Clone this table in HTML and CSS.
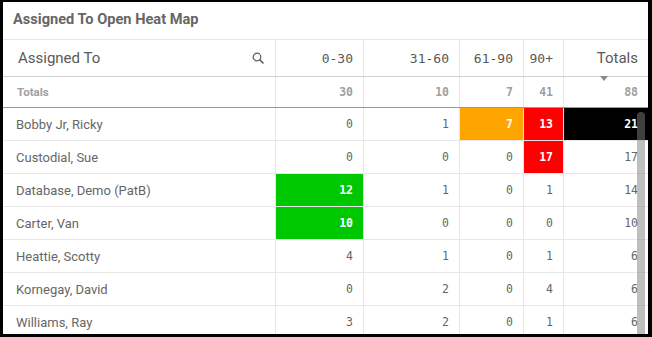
FILE: index.html
```html
<!DOCTYPE html>
<html>
<head>
<meta charset="utf-8">
<link rel="stylesheet" href="styles.css">
</head>
<body>
<div class="panel">
  <div class="title">Assigned To Open Heat Map</div>
  <div class="table">
    <div class="row head">
      <div class="cell dim">
        <span>Assigned To</span>
        <svg class="search" width="12" height="12" viewBox="0 0 12 12"><circle cx="5" cy="5" r="3.8" fill="none" stroke="#595959" stroke-width="1.2"/><line x1="7.8" y1="7.8" x2="11" y2="11" stroke="#595959" stroke-width="1.6" stroke-linecap="round"/></svg>
      </div>
      <div class="cell num">0-30</div>
      <div class="cell num">31-60</div>
      <div class="cell num">61-90</div>
      <div class="cell num">90+</div>
      <div class="cell num sorted">Totals<span class="sort"></span></div>
    </div>
    <div class="row totals">
      <div class="cell dim">Totals</div>
      <div class="cell num">30</div>
      <div class="cell num">10</div>
      <div class="cell num">7</div>
      <div class="cell num">41</div>
      <div class="cell num">88</div>
    </div>
    <div class="row">
      <div class="cell dim">Bobby Jr, Ricky</div>
      <div class="cell num">0</div>
      <div class="cell num">1</div>
      <div class="cell num orange">7</div>
      <div class="cell num red">13</div>
      <div class="cell num black">21</div>
    </div>
    <div class="row">
      <div class="cell dim">Custodial, Sue</div>
      <div class="cell num">0</div>
      <div class="cell num">0</div>
      <div class="cell num">0</div>
      <div class="cell num red">17</div>
      <div class="cell num">17</div>
    </div>
    <div class="row">
      <div class="cell dim">Database, Demo (PatB)</div>
      <div class="cell num green">12</div>
      <div class="cell num">1</div>
      <div class="cell num">0</div>
      <div class="cell num">1</div>
      <div class="cell num">14</div>
    </div>
    <div class="row">
      <div class="cell dim">Carter, Van</div>
      <div class="cell num green">10</div>
      <div class="cell num">0</div>
      <div class="cell num">0</div>
      <div class="cell num">0</div>
      <div class="cell num">10</div>
    </div>
    <div class="row">
      <div class="cell dim">Heattie, Scotty</div>
      <div class="cell num">4</div>
      <div class="cell num">1</div>
      <div class="cell num">0</div>
      <div class="cell num">1</div>
      <div class="cell num">6</div>
    </div>
    <div class="row">
      <div class="cell dim">Kornegay, David</div>
      <div class="cell num">0</div>
      <div class="cell num">2</div>
      <div class="cell num">0</div>
      <div class="cell num">4</div>
      <div class="cell num">6</div>
    </div>
    <div class="row">
      <div class="cell dim">Williams, Ray</div>
      <div class="cell num">3</div>
      <div class="cell num">2</div>
      <div class="cell num">0</div>
      <div class="cell num">1</div>
      <div class="cell num">6</div>
    </div>
  </div>
  <div class="scrollbar"></div>
</div>
</body>
</html>
```

FILE: styles.css
```css
html, body {
  margin: 0;
  padding: 0;
  background: #000;
  width: 652px;
  height: 337px;
  overflow: hidden;
}
body {
  padding: 2px 4px 3px 3px;
  box-sizing: border-box;
}
.panel {
  position: relative;
  background: #fff;
  width: 645px;
  height: 332px;
  overflow: hidden;
  font-family: Roboto, "Open Sans", sans-serif;
  color: #666;
}
.title {
  height: 38px;
  box-sizing: border-box;
  border-bottom: 1px solid #e6e6e6;
  padding: 8px 0 0 10px;
  font-size: 14.6px;
  font-weight: 700;
  color: #666;
}
.row {
  display: grid;
  grid-template-columns: 273px 88px 96px 64px 40px 84px;
  height: 33px;
  box-sizing: border-box;
  border-bottom: 1px solid #e8e8e8;
}
.row.head {
  height: 37px;
  border-bottom-color: #cfcfcf;
}
.row.totals {
  height: 31px;
  border-bottom-color: #9a9a9a;
}
.cell {
  box-sizing: border-box;
  border-right: 1px solid #e6e6e6;
  display: flex;
  align-items: center;
  font-size: 13px;
  color: #666;
}
.cell:last-child {
  border-right: none;
}
.dim {
  padding-left: 13px;
}
.num {
  justify-content: flex-end;
  padding-right: 10px;
  font-family: "DejaVu Sans Mono", "Liberation Mono", monospace;
  font-size: 11.5px;
  color: #666;
}
.head .dim {
  padding-left: 15px;
  padding-right: 11px;
  justify-content: space-between;
  font-size: 15px;
  color: #595959;
}
.head .num {
  font-size: 13px;
  color: #595959;
}
.head .sorted {
  position: relative;
  font-family: Roboto, "Open Sans", sans-serif;
  font-size: 15px;
}
.sort {
  position: absolute;
  left: 36px;
  bottom: -5px;
  width: 0;
  height: 0;
  border-left: 4px solid transparent;
  border-right: 4px solid transparent;
  border-top: 5px solid #8a8a8a;
}
.totals .cell {
  font-weight: 700;
  color: #a0a0a0;
}
.totals .dim {
  font-size: 11.5px;
  padding-left: 14px;
}
.totals .num {
  font-size: 11.5px;
}
.orange, .red, .black, .green {
  color: #fff;
  font-weight: 700;
}
.orange { background: #ffa500; }
.red { background: #ff0000; }
.black { background: #000; }
.green { background: #00c800; }
.scrollbar {
  position: absolute;
  left: 634px;
  top: 110px;
  bottom: 0;
  width: 8px;
  border-radius: 4px 4px 0 0;
  background: rgba(128, 128, 128, 0.5);
}
```
